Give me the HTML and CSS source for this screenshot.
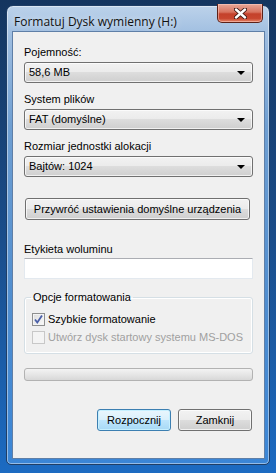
FILE: index.html
```html
<!DOCTYPE html>
<html lang="pl">

<head>
    <meta charset="UTF-8">
    <title>Formatuj Dysk wymienny (H:)</title>
    <link rel="stylesheet" href="styles.css">
</head>

<body>
    <div class="window">
        <div class="titlebar">
            <span class="title">Formatuj Dysk wymienny (H:)</span>
            <button class="close">
                <svg width="13" height="11" viewBox="0 0 13 11">
                    <path d="M2 1.5 L11 9.5 M11 1.5 L2 9.5" stroke="#3a1410" stroke-width="4.2" stroke-linecap="round" />
                    <path d="M2 1.5 L11 9.5 M11 1.5 L2 9.5" stroke="#fff" stroke-width="2.4" stroke-linecap="round" />
                </svg>
            </button>
        </div>
        <div class="client">
            <label class="lbl lbl-first">Pojemność:</label>
            <div class="combo">58,6 MB<span class="arrow"></span></div>

            <label class="lbl">System plików</label>
            <div class="combo">FAT (domyślne)<span class="arrow"></span></div>

            <label class="lbl">Rozmiar jednostki alokacji</label>
            <div class="combo">Bajtów: 1024<span class="arrow"></span></div>

            <button class="btn btn-restore">Przywróć ustawienia domyślne urządzenia</button>

            <label class="lbl lbl-volume">Etykieta woluminu</label>
            <div class="textbox"></div>

            <fieldset class="group">
                <legend>Opcje formatowania</legend>
                <div class="check-row">
                    <span class="check checked">
                        <svg width="11" height="11" viewBox="0 0 11 11">
                            <path d="M2 5.5 L4.3 8.5 L9 1.5" fill="none" stroke="#4a5fa8" stroke-width="1.8" />
                        </svg>
                    </span>
                    <span>Szybkie formatowanie</span>
                </div>
                <div class="check-row disabled">
                    <span class="check"></span>
                    <span>Utwórz dysk startowy systemu MS-DOS</span>
                </div>
            </fieldset>

            <div class="progress"></div>

            <div class="actions">
                <button class="btn btn-default">Rozpocznij</button>
                <button class="btn">Zamknij</button>
            </div>
        </div>
    </div>
</body>

</html>
```

FILE: styles.css
```css
body {
    margin: 0;
    padding: 5px 6px 8px 6px;
    height: 473px;
    box-sizing: border-box;
    background: linear-gradient(to bottom, #14355f 0%, #1a4d8a 50%, #1c6bc2 100%);
    font-family: "Liberation Sans", Arial, sans-serif;
    font-size: 11px;
    color: #000;
}

.window {
    width: 264px;
    height: 460px;
    box-sizing: border-box;
    border: 1px solid #1f3e66;
    border-radius: 7px 7px 5px 5px;
    background: linear-gradient(to bottom, #bcd2ea 0%, #9ebde0 30px, #6f9fd2 120px, #4f8dcf 300px, #3b86d6 100%);
    box-shadow: inset 0 0 0 1px rgba(255, 255, 255, .45);
    padding: 0 4px 5px 5px;
    display: flex;
    flex-direction: column;
}

.titlebar {
    height: 25px;
    display: flex;
    justify-content: space-between;
    align-items: flex-start;
}

.title {
    font-family: "Open Sans", "Noto Sans", sans-serif;
    font-size: 12px;
    color: #111;
    margin-top: 7px;
    margin-left: 2px;
    text-shadow: 0 0 6px rgba(255, 255, 255, .9);
}

.close {
    width: 46px;
    height: 19px;
    margin-top: -2px;
    margin-right: 2px;
    padding: 0;
    border: 1px solid #5c2118;
    border-top: none;
    border-radius: 0 0 5px 5px;
    background: linear-gradient(to bottom, #e8a898 0%, #d8735f 45%, #c4412b 55%, #c8462f 80%, #e4866a 100%);
    box-shadow: inset 0 0 0 1px rgba(255, 210, 200, .5);
    display: flex;
    align-items: center;
    justify-content: center;
}

.client {
    flex: 1;
    background: #f0f0f0;
    border: 1px solid #5f7fa7;
    padding: 0 11px 0 11px;
    display: flex;
    flex-direction: column;
}

.lbl {
    display: block;
    line-height: 13px;
    margin-top: 10px;
    margin-bottom: 3px;
}

.lbl-first {
    margin-top: 14px;
}

.lbl-volume {
    margin-top: 23px;
    margin-bottom: 2px;
}

.combo {
    position: relative;
    height: 21px;
    box-sizing: border-box;
    border: 1px solid #707070;
    border-radius: 3px;
    background: linear-gradient(to bottom, #f2f2f2 0%, #ebebeb 50%, #dddddd 50%, #cfcfcf 100%);
    box-shadow: inset 0 0 0 1px rgba(255, 255, 255, .7);
    padding-left: 4px;
    line-height: 19px;
}

.arrow {
    position: absolute;
    right: 7px;
    top: 8px;
    width: 0;
    height: 0;
    border-left: 4px solid transparent;
    border-right: 4px solid transparent;
    border-top: 4px solid #000;
}

.btn {
    font-family: inherit;
    font-size: 11px;
    color: #000;
    height: 22px;
    box-sizing: border-box;
    border: 1px solid #707070;
    border-radius: 3px;
    background: linear-gradient(to bottom, #f2f2f2 0%, #ebebeb 50%, #dddddd 50%, #cfcfcf 100%);
    box-shadow: inset 0 0 0 1px rgba(255, 255, 255, .7);
    padding: 0;
}

.btn-restore {
    margin-top: 21px;
    margin-left: 1px;
    margin-right: 3px;
}

.textbox {
    height: 21px;
    box-sizing: border-box;
    background: #fff;
    border: 1px solid #e3e9ef;
    border-top-color: #abadb3;
}

.group {
    margin: 12px 0 0 0;
    padding: 6px 7px 7px 7px;
    border: 1px solid #d5dfe5;
    border-radius: 3px;
    box-shadow: inset 0 0 0 1px #fff;
}

.group legend {
    padding: 0 2px;
    margin-left: -1px;
    line-height: 13px;
}

.check-row {
    display: flex;
    align-items: center;
    gap: 3px;
    height: 18px;
}

.check {
    width: 13px;
    height: 13px;
    box-sizing: border-box;
    border: 1px solid #8e8f8f;
    background: linear-gradient(135deg, #dcdcdc 0%, #fbfbfb 100%);
    box-shadow: inset 0 0 0 1px #f4f4f4;
    display: flex;
    align-items: center;
    justify-content: center;
}

.disabled {
    color: #a0a0a0;
}

.disabled .check {
    border-color: #c8c8c8;
    background: #f4f4f4;
    box-shadow: none;
}

.progress {
    margin-top: 14px;
    height: 13px;
    box-sizing: border-box;
    border: 1px solid #b2b2b2;
    border-radius: 3px;
    background: linear-gradient(to bottom, #f3f3f3 0%, #e6e6e6 50%, #d8d8d8 100%);
}

.actions {
    margin-top: 28px;
    display: flex;
    justify-content: flex-end;
    gap: 7px;
    padding-right: 1px;
}

.actions .btn {
    width: 74px;
}

.btn-default {
    border-color: #3c7fb1;
    background: linear-gradient(to bottom, #eaf6fd 0%, #d9f0fc 50%, #bee6fd 50%, #a7d9f5 100%);
    box-shadow: inset 0 0 0 1px #c6f0ff;
}
```
